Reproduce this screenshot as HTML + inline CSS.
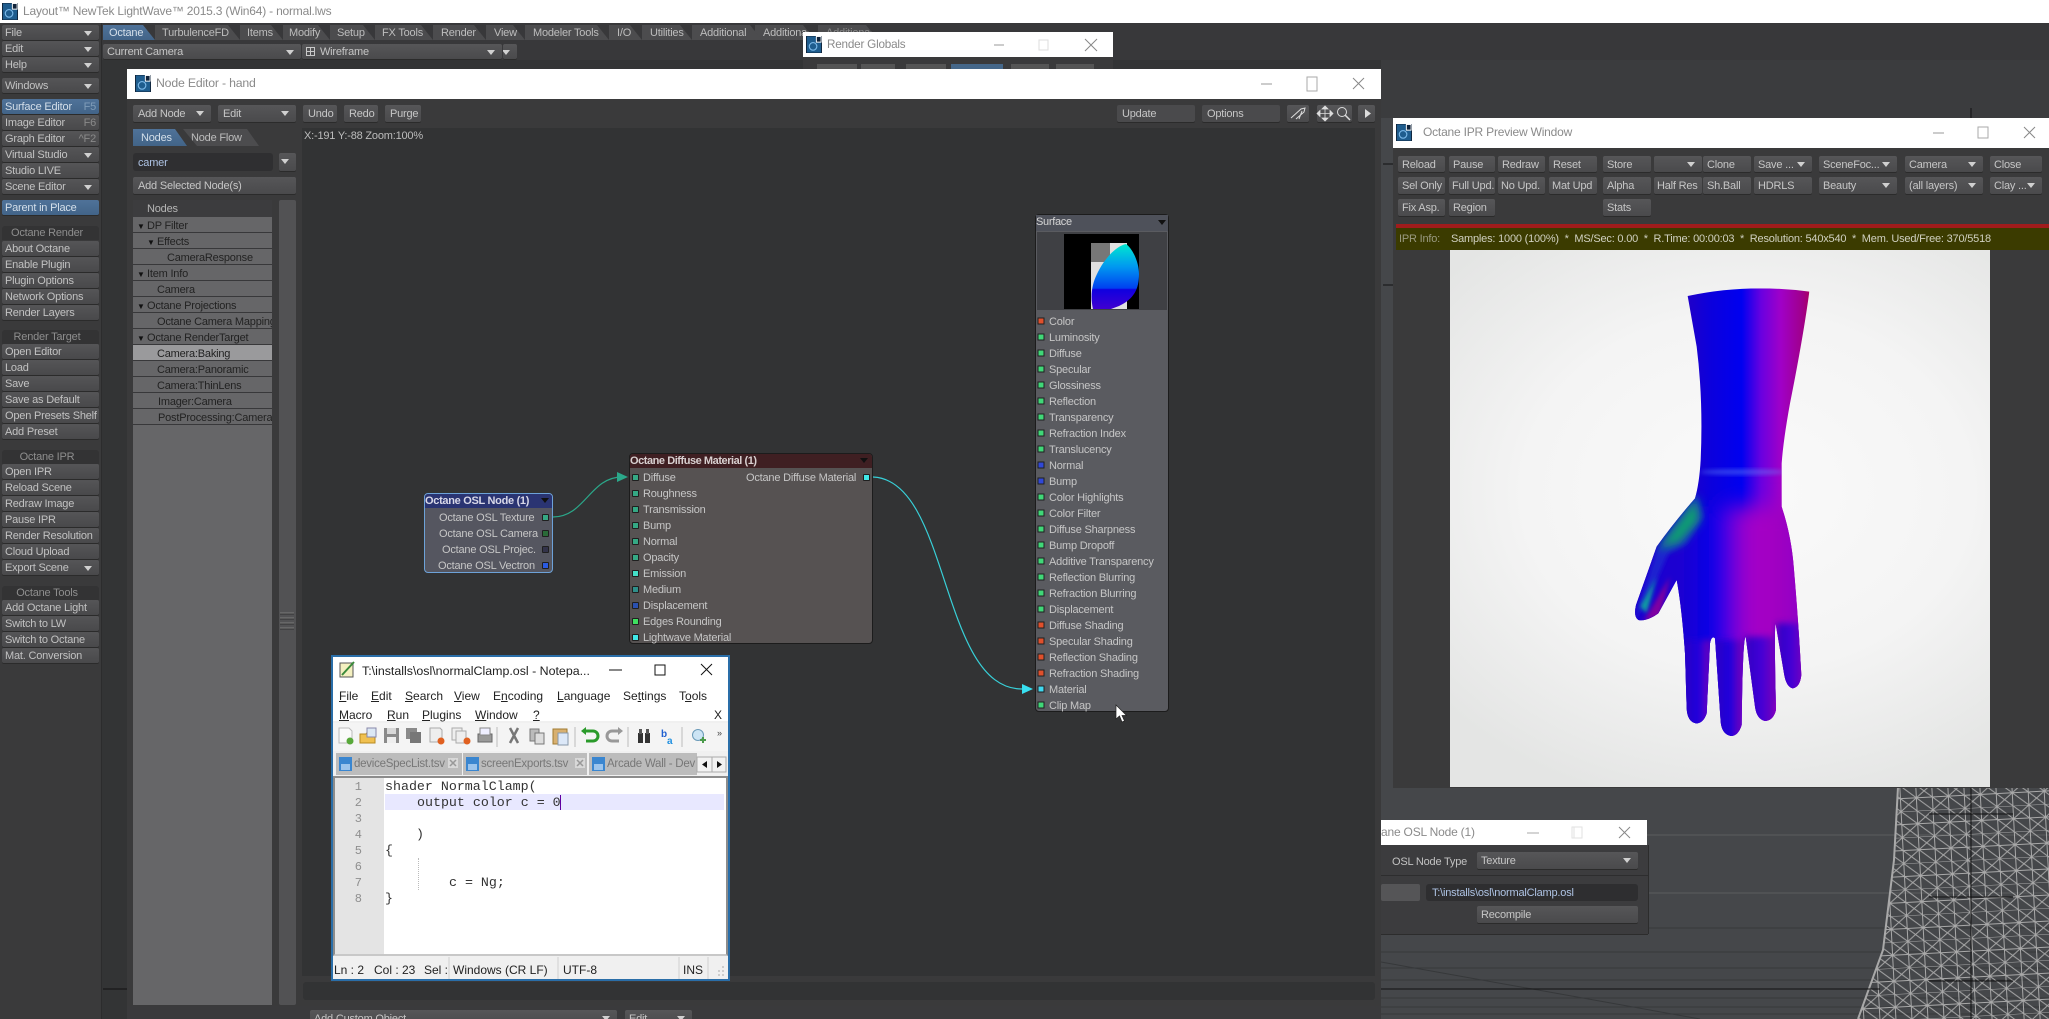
<!DOCTYPE html>
<html><head><meta charset="utf-8"><title>Layout</title>
<style>
html,body{margin:0;padding:0;background:#3a3a3b}
#r{position:relative;width:2049px;height:1019px;overflow:hidden;background:#3a3a3b;font-family:"Liberation Sans",sans-serif;font-size:11px;color:#c2c2c2;letter-spacing:-.2px}
#r div,#r svg{position:absolute}
.t,.b,.l,.tab,.nr,.li{white-space:nowrap}
.b{height:16px;line-height:16px;background:linear-gradient(#565658,#4a4a4c);border-radius:2px;padding-left:4px;padding-top:1px;box-sizing:border-box;box-shadow:0 1px 0 #2b2b2b;color:#c6c6c6;overflow:hidden}
.l{left:2px;width:97px;height:15px;line-height:15px;background:linear-gradient(#555557,#49494b);border-radius:2px;padding-left:3px;padding-top:1px;box-sizing:border-box;box-shadow:0 1px 0 #2b2b2b;color:#c2c2c2;overflow:hidden}
.bl{background:linear-gradient(#4f7299,#426488)!important;color:#d4dfea!important}
.a::after{content:"";position:absolute;right:7px;top:6px;border-top:5px solid #d0d0d0;border-left:4px solid transparent;border-right:4px solid transparent}
.k{position:absolute;right:3px;top:1px;color:#8a8a8a}
.h{left:2px;width:97px;height:14px;line-height:15px;background:#333334;border-radius:3px 3px 0 0;text-align:center;color:#8e8e8e;padding-right:7px;box-sizing:border-box}
.tab{top:25px;height:15px;line-height:15px;padding-top:1px;background:#4c4c4e;clip-path:polygon(0 0,calc(100% - 12px) 0,100% 100%,0 100%);color:#bdbdbd}
.w{background:#fff}
.tt{color:#8a8a8a;font-size:12px;white-space:nowrap}
.li{left:133px;width:139px;height:16px;line-height:16px;padding-top:1px;box-sizing:border-box;background:#666668;border-bottom:1px solid #38383a;color:#222;overflow:hidden;padding-left:14px}
.li span{position:absolute;font-size:8px;left:4px;top:2px;color:#111}
.nr{height:16px;line-height:16px;padding-top:1px;box-sizing:border-box;color:#c6c6c6}
.s{width:5px;height:5px;border:1px solid #1f1f1f;border-radius:1px}
.m{color:#222;font-size:12px;white-space:nowrap;letter-spacing:0}
.c{font-family:"Liberation Mono",monospace;font-size:13.3px;color:#333;white-space:pre;line-height:16px;letter-spacing:0}
.g{font-family:"Liberation Mono",monospace;font-size:12px;color:#8f8f8f;width:20px;text-align:right;left:342px;line-height:16px;letter-spacing:0}
.p{height:17px;line-height:17px}
</style></head><body><div id="r">

<!-- viewport background -->
<svg width="2049" height="1019" style="left:0;top:0">
<defs>
<pattern id="mesh" width="32" height="26" patternUnits="userSpaceOnUse" patternTransform="rotate(-3)">
<path d="M0 0H32M0 13H32M0 0V26M16 0V26M32 0V26M0 0L16 13L32 0M0 26L16 13L32 26M0 13L16 26M16 0L32 13" stroke="#a9a9a9" stroke-width="1" fill="none"/>
</pattern>
<symbol id="lw" viewBox="0 0 16 18"><rect width="16" height="18" fill="#1f5d8e"/><rect x="0" y="0" width="16" height="18" fill="none" stroke="#10233a"/><path d="M10 0h6v7h-6z" fill="#fff"/><path d="M11 1h4v5h-4z" fill="#10233a"/><circle cx="7" cy="11" r="4" fill="none" stroke="#7ab8e8" stroke-width="1.2"/></symbol>
</defs>
<rect x="1381" y="60" width="668" height="960" fill="#45474a"/>
<rect x="1381" y="60" width="668" height="58" fill="#3b3c3e"/>
<path d="M1381 835H2049M1381 893H2049" stroke="#5a5d5f" stroke-width="1"/>
<path d="M1381 928H2049M1381 952H2049M1381 968H2049M1381 980H2049M1381 998H2049M1381 1007H2049M1381 1014H2049" stroke="#36383a" stroke-width="1"/>
<path d="M1381 962L1700 1019" stroke="#36383a"/>
<path d="M1898 787L1894 860L1883 950L1858 1019H2049V787Z" fill="url(#mesh)"/>
<path d="M1898 787L1894 860L1883 950L1858 1019" stroke="#a9a9a9" stroke-width="2" fill="none"/>
<path d="M1381 989H1880M1971 787V1019M1929 814H2013M1929 897H2013M1929 981H2013M1971 108V118M1383 164H1393M1383 285H1393" stroke="#111" stroke-width="1"/>
<rect x="100" y="42" width="1281" height="977" fill="#333435"/>
<rect x="0" y="23" width="2049" height="37" fill="#38383a"/>
<rect x="0" y="23" width="101" height="996" fill="#3a3a3b"/>
<rect x="101" y="23" width="1" height="996" fill="#2c2c2d"/>
<rect x="103" y="60" width="24" height="959" fill="#333435"/>
<rect x="127" y="1006" width="1254" height="13" fill="#3a3a3c"/>
<path d="M103 989H127" stroke="#111"/>
</svg>

<!-- main title -->
<div class="w" style="left:0;top:0;width:2049px;height:23px"></div>
<svg width="16" height="17" style="left:2px;top:3px"><use href="#lw"/></svg>
<div class="tt" style="left:23px;top:4px;line-height:15px">Layout™ NewTek LightWave™ 2015.3 (Win64) - normal.lws</div>

<!-- left column -->
<div class="l a" style="top:25px">File</div>
<div class="l a" style="top:41px">Edit</div>
<div class="l a" style="top:57px">Help</div>
<div class="l a" style="top:78px">Windows</div>
<div class="l bl" style="top:99px">Surface Editor<span class="k" style="color:#7f9cb8">F5</span></div>
<div class="l" style="top:115px">Image Editor<span class="k">F6</span></div>
<div class="l" style="top:131px">Graph Editor<span class="k">^F2</span></div>
<div class="l a" style="top:147px">Virtual Studio</div>
<div class="l" style="top:163px">Studio LIVE</div>
<div class="l a" style="top:179px">Scene Editor</div>
<div class="l bl" style="top:200px">Parent in Place</div>
<div class="h" style="top:226px">Octane Render</div>
<div class="l" style="top:241px">About Octane</div>
<div class="l" style="top:257px">Enable Plugin</div>
<div class="l" style="top:273px">Plugin Options</div>
<div class="l" style="top:289px">Network Options</div>
<div class="l" style="top:305px">Render Layers</div>
<div class="h" style="top:330px">Render Target</div>
<div class="l" style="top:344px">Open Editor</div>
<div class="l" style="top:360px">Load</div>
<div class="l" style="top:376px">Save</div>
<div class="l" style="top:392px">Save as Default</div>
<div class="l" style="top:408px">Open Presets Shelf</div>
<div class="l" style="top:424px">Add Preset</div>
<div class="h" style="top:450px">Octane IPR</div>
<div class="l" style="top:464px">Open IPR</div>
<div class="l" style="top:480px">Reload Scene</div>
<div class="l" style="top:496px">Redraw Image</div>
<div class="l" style="top:512px">Pause IPR</div>
<div class="l" style="top:528px">Render Resolution</div>
<div class="l" style="top:544px">Cloud Upload</div>
<div class="l a" style="top:560px">Export Scene</div>
<div class="h" style="top:586px">Octane Tools</div>
<div class="l" style="top:600px">Add Octane Light</div>
<div class="l" style="top:616px">Switch to LW</div>
<div class="l" style="top:632px">Switch to Octane</div>
<div class="l" style="top:648px">Mat. Conversion</div>

<!-- tabs -->
<div class="tab" style="left:755px;width:60px;padding-left:8px;box-sizing:border-box">Additional</div>
<div class="tab" style="left:818px;width:60px;padding-left:8px;box-sizing:border-box;color:#8a8a8a">Additional</div>
<div class="tab" style="left:692px;width:70px;padding-left:8px;box-sizing:border-box">Additional</div>
<div class="tab" style="left:642px;width:50px;padding-left:8px;box-sizing:border-box">Utilities</div>
<div class="tab" style="left:609px;width:33px;padding-left:8px;box-sizing:border-box">I/O</div>
<div class="tab" style="left:525px;width:84px;padding-left:8px;box-sizing:border-box">Modeler Tools</div>
<div class="tab" style="left:486px;width:39px;padding-left:8px;box-sizing:border-box">View</div>
<div class="tab" style="left:433px;width:53px;padding-left:8px;box-sizing:border-box">Render</div>
<div class="tab" style="left:375px;width:58px;padding-left:7px;box-sizing:border-box">FX Tools</div>
<div class="tab" style="left:330px;width:45px;padding-left:7px;box-sizing:border-box">Setup</div>
<div class="tab" style="left:283px;width:47px;padding-left:6px;box-sizing:border-box">Modify</div>
<div class="tab" style="left:240px;width:43px;padding-left:7px;box-sizing:border-box">Items</div>
<div class="tab" style="left:155px;width:85px;padding-left:7px;box-sizing:border-box">TurbulenceFD</div>
<div class="tab bl" style="left:103px;width:52px;padding-left:6px;box-sizing:border-box">Octane</div>

<div class="b a" style="left:103px;top:44px;width:198px;height:15px;line-height:15px">Current Camera</div>
<div class="b a" style="left:302px;top:44px;width:200px;height:15px;line-height:15px;padding-left:18px">Wireframe</div>
<svg width="10" height="10" style="left:306px;top:47px"><path d="M.5.5h8v8h-8zM4.500.5v8M.5 4.500h8" stroke="#c8c8c8" fill="none"/></svg>
<div class="b a" style="left:503px;top:44px;width:14px;height:15px"></div>

<!-- Render Globals -->
<div style="left:803px;top:57px;width:310px;height:14px;background:#3a3a3b"></div>
<div class="w" style="left:803px;top:32px;width:310px;height:25px"></div>
<svg width="16" height="17" style="left:806px;top:36px"><use href="#lw"/></svg>
<div class="tt" style="left:827px;top:37px;line-height:15px;font-size:11.7px">Render Globals</div>
<svg width="310" height="25" style="left:803px;top:32px"><path d="M191 13H201" stroke="#999" fill="none"/><path d="M236 8h9v10h-9z" stroke="#ddd" fill="none"/><path d="M282 7L294 19M294 7L282 19" stroke="#888" fill="none"/></svg>
<div style="left:817px;top:64px;width:40px;height:5px;background:#555"></div>
<div style="left:861px;top:64px;width:34px;height:5px;background:#555"></div>
<div style="left:906px;top:64px;width:40px;height:5px;background:#555"></div>
<div style="left:951px;top:64px;width:52px;height:5px;background:#456789"></div>
<div style="left:1011px;top:64px;width:38px;height:5px;background:#555"></div>
<div style="left:1056px;top:64px;width:38px;height:5px;background:#555"></div>

<!-- OSL Panel -->
<div style="left:1381px;top:845px;width:267px;height:89px;background:#3c3c3e;box-shadow:0 1px 0 #2c2c2c,1px 0 0 #2c2c2c"></div>
<div class="w" style="left:1381px;top:820px;width:266px;height:25px"></div>
<div class="tt" style="left:1381px;top:825px;line-height:15px">ane OSL Node (1)</div>
<svg width="266" height="25" style="left:1381px;top:820px"><path d="M146 13H158" stroke="#aaa" fill="none"/><path d="M191 7h10v11h-10zM193 7v11" stroke="#e2e2e2" fill="none"/><path d="M238 7L249 18M249 7L238 18" stroke="#888" fill="none"/></svg>
<div class="t" style="left:1392px;top:854px;line-height:16px">OSL Node Type</div>
<div class="b a" style="left:1477px;top:852px;width:161px;height:17px;line-height:17px">Texture</div>
<div style="left:1381px;top:875px;width:267px;height:1px;background:#2d2d2e"></div>
<div style="left:1381px;top:884px;width:39px;height:17px;background:#555557;border-radius:2px"></div>
<div style="left:1426px;top:884px;width:212px;height:17px;background:#2e2e30;border-radius:3px"></div>
<div class="t" style="left:1432px;top:885px;line-height:17px;color:#aec3e4">T:\installs\osl\normalClamp.osl</div>
<div class="b" style="left:1477px;top:906px;width:161px;height:17px;line-height:17px">Recompile</div>

<!-- Node Editor -->
<div style="left:127px;top:99px;width:1254px;height:907px;background:#3a3a3b"></div>
<div class="w" style="left:127px;top:69px;width:1254px;height:30px"></div>
<svg width="16" height="17" style="left:135px;top:75px"><use href="#lw"/></svg>
<div class="tt" style="left:156px;top:75px;line-height:17px;font-size:12.3px">Node Editor - hand</div>
<svg width="1254" height="30" style="left:127px;top:69px"><path d="M1134 15H1145" stroke="#999" fill="none"/><path d="M1180 8h10v14h-10z" stroke="#aaa" fill="none"/><path d="M1226 9L1237 20M1237 9L1226 20" stroke="#888" fill="none"/></svg>

<div class="b a p" style="left:133px;top:105px;width:78px;padding-left:5px">Add Node</div>
<div class="b a p" style="left:218px;top:105px;width:78px;padding-left:5px">Edit</div>
<div class="b p" style="left:303px;top:105px;width:34px;padding-left:5px">Undo</div>
<div class="b p" style="left:344px;top:105px;width:34px;padding-left:5px">Redo</div>
<div class="b p" style="left:385px;top:105px;width:36px;padding-left:5px">Purge</div>
<div class="b p" style="left:1117px;top:105px;width:78px;padding-left:5px;background:#4a4a4c">Update</div>
<div class="b p" style="left:1202px;top:105px;width:78px;padding-left:5px;background:#4a4a4c">Options</div>
<div class="b p" style="left:1287px;top:105px;width:22px"></div>
<div class="b p" style="left:1317px;top:105px;width:35px"></div>
<div class="b p" style="left:1358px;top:105px;width:17px"></div>
<svg width="70" height="17" style="left:1287px;top:105px"><path d="M4 13L14 4L18 3L17 7L9 14M15 6L12 14" stroke="#ddd" fill="none"/><path d="M30 8.500H46M38 1V16M30 8.500l3-3v6zM46 8.500l-3-3v6zM38 1l-3 3h6zM38 16l-3-3h6z" stroke="#ddd" fill="#ddd" stroke-width=".8"/></svg>
<svg width="40" height="17" style="left:1335px;top:105px"><circle cx="7" cy="7" r="4.500" stroke="#ddd" fill="none"/><path d="M10 10L15 15" stroke="#ddd" stroke-width="1.500"/><path d="M30 4L36 8.500L30 13Z" fill="#ddd"/></svg>

<div class="tab bl" style="left:133px;top:129px;width:54px;height:17px;line-height:17px;padding-left:8px;box-sizing:border-box">Nodes</div>
<div class="tab" style="left:183px;top:129px;width:76px;height:17px;line-height:17px;padding-left:8px;box-sizing:border-box;z-index:0;background:#4c4c4e;clip-path:polygon(0 0,calc(100% - 12px) 0,100% 100%,14px 100%)">Node Flow</div>
<div style="left:133px;top:153px;width:140px;height:18px;background:#2f2f31;border-radius:3px"></div>
<div class="t" style="left:138px;top:154px;line-height:18px;color:#aec3e4">camer</div>
<div class="b a" style="left:279px;top:153px;width:17px;height:18px"></div>
<div class="b p" style="left:133px;top:177px;width:163px;padding-left:5px">Add Selected Node(s)</div>

<!-- list -->
<div style="left:133px;top:200px;width:139px;height:805px;background:#666668"></div>
<div style="left:279px;top:200px;width:17px;height:805px;background:#525254;border-radius:2px"></div>
<svg width="17" height="20" style="left:279px;top:611px"><path d="M1 2H15M1 7H15M1 12H15M1 17H15" stroke="#7c7c7c"/><path d="M1 3H15M1 8H15M1 13H15M1 18H15" stroke="#333"/></svg>
<div class="li" style="top:200px;height:17px;background:#3c3c3e;color:#b6b6b6;border:0;line-height:17px;">Nodes</div>
<div class="li" style="top:217px"><span>▼</span>DP Filter</div>
<div class="li" style="top:233px;padding-left:24px"><span style="left:14px">▼</span>Effects</div>
<div class="li" style="top:249px;padding-left:34px">CameraResponse</div>
<div class="li" style="top:265px"><span>▼</span>Item Info</div>
<div class="li" style="top:281px;padding-left:24px">Camera</div>
<div class="li" style="top:297px"><span>▼</span>Octane Projections</div>
<div class="li" style="top:313px;padding-left:24px">Octane Camera Mapping</div>
<div class="li" style="top:329px"><span>▼</span>Octane RenderTarget</div>
<div class="li" style="top:345px;padding-left:24px;background:#9a9a9c">Camera:Baking</div>
<div class="li" style="top:361px;padding-left:24px">Camera:Panoramic</div>
<div class="li" style="top:377px;padding-left:24px">Camera:ThinLens</div>
<div class="li" style="top:393px;padding-left:25px">Imager:Camera</div>
<div class="li" style="top:409px;padding-left:25px">PostProcessing:Camera</div>

<!-- canvas -->
<div style="left:302px;top:128px;width:1073px;height:848px;background:#323334"></div>
<div style="left:303px;top:982px;width:1072px;height:18px;background:#323334;border-radius:3px"></div>
<div class="t" style="left:304px;top:129px;line-height:15px;color:#bdbdbd">X:-191 Y:-88 Zoom:100%</div>

<!-- nodes -->
<svg width="1100" height="300" style="left:500px;top:440px;overflow:visible">
<path d="M53 77C85 77 90 37 122 37" stroke="#2ba88a" fill="none" stroke-width="1.200"/>
<path d="M117 32L128 37L117 42Z" fill="#2ba88a"/>
<path d="M373 37C450 40 440 249 522 249" stroke="#38d0d8" fill="none" stroke-width="1.200"/>
<path d="M522 244L533 249L522 254Z" fill="#38e0f0"/>
</svg>

<div style="left:424px;top:493px;width:129px;height:80px;background:#555660;border:1px solid #6da2d8;box-sizing:border-box;border-radius:4px"></div>
<div style="left:425px;top:494px;width:127px;height:14px;background:#2a3472;border-radius:3px 3px 0 0"></div>
<div class="t" style="left:425px;top:493px;line-height:16px;font-weight:bold;color:#d8d8e8;letter-spacing:-.3px">Octane OSL Node (1)</div>
<div style="left:541px;top:498px;border-top:5px solid #111;border-left:4px solid transparent;border-right:4px solid transparent"></div>
<div class="nr" style="left:439px;top:509px">Octane OSL Texture</div>
<div class="nr" style="left:439px;top:525px">Octane OSL Camera</div>
<div class="nr" style="left:442px;top:541px">Octane OSL Projec.</div>
<div class="nr" style="left:438px;top:557px">Octane OSL Vectron</div>
<div class="s" style="left:542px;top:514px;background:#35a884"></div>
<div class="s" style="left:542px;top:530px;background:#2a6a38"></div>
<div class="s" style="left:542px;top:546px;background:#33334a"></div>
<div class="s" style="left:542px;top:562px;background:#2a5ae0"></div>

<div style="left:629px;top:453px;width:244px;height:191px;background:#565252;border:1px solid #1c1c1c;box-sizing:border-box;border-radius:4px"></div>
<div style="left:630px;top:454px;width:242px;height:14px;background:#3f1f22;border-radius:3px 3px 0 0"></div>
<div class="t" style="left:630px;top:453px;line-height:16px;font-weight:bold;color:#d8d0d0;letter-spacing:-.45px">Octane Diffuse Material (1)</div>
<div style="left:860px;top:458px;border-top:5px solid #111;border-left:4px solid transparent;border-right:4px solid transparent"></div>
<div class="nr" style="left:643px;top:469px">Diffuse</div>
<div class="nr" style="left:643px;top:485px">Roughness</div>
<div class="nr" style="left:643px;top:501px">Transmission</div>
<div class="nr" style="left:643px;top:517px">Bump</div>
<div class="nr" style="left:643px;top:533px">Normal</div>
<div class="nr" style="left:643px;top:549px">Opacity</div>
<div class="nr" style="left:643px;top:565px">Emission</div>
<div class="nr" style="left:643px;top:581px">Medium</div>
<div class="nr" style="left:643px;top:597px">Displacement</div>
<div class="nr" style="left:643px;top:613px">Edges Rounding</div>
<div class="nr" style="left:643px;top:629px">Lightwave Material</div>
<div class="nr" style="left:746px;top:469px">Octane Diffuse Material</div>
<div class="s" style="left:632px;top:474px;background:#35a884"></div>
<div class="s" style="left:632px;top:490px;background:#35a884"></div>
<div class="s" style="left:632px;top:506px;background:#35a884"></div>
<div class="s" style="left:632px;top:522px;background:#35a884"></div>
<div class="s" style="left:632px;top:538px;background:#35a884"></div>
<div class="s" style="left:632px;top:554px;background:#35a884"></div>
<div class="s" style="left:632px;top:570px;background:#44e0c8"></div>
<div class="s" style="left:632px;top:586px;background:#2f8f8a"></div>
<div class="s" style="left:632px;top:602px;background:#2a50b0"></div>
<div class="s" style="left:632px;top:618px;background:#3fe060"></div>
<div class="s" style="left:632px;top:634px;background:#40e8e8"></div>
<div class="s" style="left:863px;top:474px;background:#40e8e8"></div>

<div style="left:1035px;top:214px;width:134px;height:498px;background:#5a5b60;border:1px solid #1c1c1c;box-sizing:border-box;border-radius:4px"></div>
<div style="left:1036px;top:215px;width:132px;height:16px;background:#4e515a"></div>
<div class="t" style="left:1036px;top:214px;line-height:17px;color:#d6d6d6;letter-spacing:-.3px">Surface</div>
<div style="left:1158px;top:220px;border-top:5px solid #111;border-left:4px solid transparent;border-right:4px solid transparent"></div>
<div style="left:1037px;top:232px;width:130px;height:78px;background:#3f4044"></div>
<svg width="75" height="75" style="left:1064px;top:234px"><defs><linearGradient id="pg" x1="0" y1="0" x2="0" y2="1"><stop offset="0" stop-color="#00e8d0"/><stop offset=".35" stop-color="#0098f0"/><stop offset=".68" stop-color="#0040f0"/><stop offset=".7" stop-color="#1000e0"/><stop offset="1" stop-color="#4000d0"/></linearGradient></defs><rect width="75" height="75"/><rect x="27" y="9" width="36" height="66" fill="#e0e0e0"/><rect x="27" y="9" width="19" height="19" fill="#777"/><path d="M29 75C26 62 28 50 33 40C40 25 52 12 62 10C70 16 75 30 75 40C75 55 70 65 55 72L47 75Z" fill="url(#pg)"/></svg>

<div class="nr" style="left:1049px;top:313px">Color</div>
<div class="nr" style="left:1049px;top:329px">Luminosity</div>
<div class="nr" style="left:1049px;top:345px">Diffuse</div>
<div class="nr" style="left:1049px;top:361px">Specular</div>
<div class="nr" style="left:1049px;top:377px">Glossiness</div>
<div class="nr" style="left:1049px;top:393px">Reflection</div>
<div class="nr" style="left:1049px;top:409px">Transparency</div>
<div class="nr" style="left:1049px;top:425px">Refraction Index</div>
<div class="nr" style="left:1049px;top:441px">Translucency</div>
<div class="nr" style="left:1049px;top:457px">Normal</div>
<div class="nr" style="left:1049px;top:473px">Bump</div>
<div class="nr" style="left:1049px;top:489px">Color Highlights</div>
<div class="nr" style="left:1049px;top:505px">Color Filter</div>
<div class="nr" style="left:1049px;top:521px">Diffuse Sharpness</div>
<div class="nr" style="left:1049px;top:537px">Bump Dropoff</div>
<div class="nr" style="left:1049px;top:553px">Additive Transparency</div>
<div class="nr" style="left:1049px;top:569px">Reflection Blurring</div>
<div class="nr" style="left:1049px;top:585px">Refraction Blurring</div>
<div class="nr" style="left:1049px;top:601px">Displacement</div>
<div class="nr" style="left:1049px;top:617px">Diffuse Shading</div>
<div class="nr" style="left:1049px;top:633px">Specular Shading</div>
<div class="nr" style="left:1049px;top:649px">Reflection Shading</div>
<div class="nr" style="left:1049px;top:665px">Refraction Shading</div>
<div class="nr" style="left:1049px;top:681px">Material</div>
<div class="nr" style="left:1049px;top:697px">Clip Map</div>
<svg width="10" height="400" style="left:1037px;top:317px"><g stroke="#1f1f1f">
<rect x="1" y="1" width="6" height="6" fill="#e0502c"/>
<rect x="1" y="17" width="6" height="6" fill="#40d878"/><rect x="1" y="33" width="6" height="6" fill="#40d878"/><rect x="1" y="49" width="6" height="6" fill="#40d878"/><rect x="1" y="65" width="6" height="6" fill="#40d878"/><rect x="1" y="81" width="6" height="6" fill="#40d878"/><rect x="1" y="97" width="6" height="6" fill="#40d878"/><rect x="1" y="113" width="6" height="6" fill="#40d878"/><rect x="1" y="129" width="6" height="6" fill="#40d878"/>
<rect x="1" y="145" width="6" height="6" fill="#3048d8"/><rect x="1" y="161" width="6" height="6" fill="#3048d8"/>
<rect x="1" y="177" width="6" height="6" fill="#40d878"/><rect x="1" y="193" width="6" height="6" fill="#40d878"/><rect x="1" y="209" width="6" height="6" fill="#40d878"/><rect x="1" y="225" width="6" height="6" fill="#40d878"/><rect x="1" y="241" width="6" height="6" fill="#40d878"/><rect x="1" y="257" width="6" height="6" fill="#40d878"/><rect x="1" y="273" width="6" height="6" fill="#40d878"/><rect x="1" y="289" width="6" height="6" fill="#40d878"/>
<rect x="1" y="305" width="6" height="6" fill="#e0502c"/><rect x="1" y="321" width="6" height="6" fill="#e0502c"/><rect x="1" y="337" width="6" height="6" fill="#e0502c"/><rect x="1" y="353" width="6" height="6" fill="#e0502c"/>
<rect x="1" y="369" width="6" height="6" fill="#40d8f0"/>
<rect x="1" y="385" width="6" height="6" fill="#40d878"/></g></svg>
<svg width="16" height="20" style="left:1115px;top:704px"><path d="M1 1V15L4.500 12L7 18L9.500 17L7 11.500H11.500Z" fill="#fff" stroke="#222" stroke-width=".7"/></svg>

<!-- bottom row behind -->
<div class="b a" style="left:310px;top:1010px;width:307px;height:15px">Add Custom Object</div>
<div class="b a" style="left:625px;top:1010px;width:67px;height:15px">Edit</div>

<!-- IPR -->
<div style="left:1393px;top:148px;width:656px;height:640px;background:#3a3a3b"></div>
<div class="w" style="left:1393px;top:118px;width:656px;height:30px"></div>
<svg width="16" height="17" style="left:1396px;top:124px"><use href="#lw"/></svg>
<div class="tt" style="left:1423px;top:125px;line-height:15px">Octane IPR Preview Window</div>
<svg width="656" height="30" style="left:1393px;top:118px"><path d="M540 15H551" stroke="#999" fill="none"/><path d="M585 9h10v11h-10z" stroke="#aaa" fill="none"/><path d="M631 9L642 20M642 9L631 20" stroke="#888" fill="none"/></svg>

<div class="b" style="left:1398px;top:156px;width:47px">Reload</div>
<div class="b" style="left:1449px;top:156px;width:46px">Pause</div>
<div class="b" style="left:1498px;top:156px;width:47px">Redraw</div>
<div class="b" style="left:1549px;top:156px;width:48px">Reset</div>
<div class="b" style="left:1603px;top:156px;width:48px">Store</div>
<div class="b a" style="left:1654px;top:156px;width:48px"></div>
<div class="b" style="left:1703px;top:156px;width:48px">Clone</div>
<div class="b a" style="left:1754px;top:156px;width:58px">Save ...</div>
<div class="b a" style="left:1819px;top:156px;width:78px">SceneFoc...</div>
<div class="b a" style="left:1905px;top:156px;width:78px">Camera</div>
<div class="b" style="left:1990px;top:156px;width:52px">Close</div>
<div class="b" style="left:1398px;top:177px;width:47px;height:17px;line-height:17px">Sel Only</div>
<div class="b" style="left:1449px;top:177px;width:46px;height:17px;line-height:17px;padding-left:3px">Full Upd.</div>
<div class="b" style="left:1498px;top:177px;width:47px;height:17px;line-height:17px;padding-left:3px">No Upd.</div>
<div class="b" style="left:1549px;top:177px;width:48px;height:17px;line-height:17px;padding-left:3px">Mat Upd</div>
<div class="b" style="left:1603px;top:177px;width:48px;height:17px;line-height:17px">Alpha</div>
<div class="b" style="left:1654px;top:177px;width:48px;height:17px;line-height:17px;padding-left:3px">Half Res</div>
<div class="b" style="left:1703px;top:177px;width:48px;height:17px;line-height:17px">Sh.Ball</div>
<div class="b" style="left:1754px;top:177px;width:58px;height:17px;line-height:17px">HDRLS</div>
<div class="b a" style="left:1819px;top:177px;width:78px;height:17px;line-height:17px">Beauty</div>
<div class="b a" style="left:1905px;top:177px;width:78px;height:17px;line-height:17px">(all layers)</div>
<div class="b a" style="left:1990px;top:177px;width:52px;height:17px;line-height:17px">Clay ...</div>
<div class="b" style="left:1398px;top:199px;width:47px;height:17px;line-height:17px">Fix Asp.</div>
<div class="b" style="left:1449px;top:199px;width:46px;height:17px;line-height:17px">Region</div>
<div class="b" style="left:1603px;top:199px;width:48px;height:17px;line-height:17px">Stats</div>
<div style="left:1396px;top:224px;width:653px;height:4px;background:#a01c1c"></div>
<div style="left:1396px;top:228px;width:653px;height:22px;background:#3b3b00"></div>
<div class="t" style="left:1399px;top:228px;line-height:22px;color:#9a9a80">IPR Info:</div>
<div class="t" style="left:1451px;top:228px;line-height:22px;color:#d0d0c0">Samples: 1000 (100%) &nbsp;* &nbsp;MS/Sec: 0.00 &nbsp;* &nbsp;R.Time: 00:00:03 &nbsp;* &nbsp;Resolution: 540x540 &nbsp;* &nbsp;Mem. Used/Free: 370/5518</div>

<div style="left:1450px;top:250px;width:540px;height:537px;background:radial-gradient(ellipse 75% 60% at 55% 45%,#fafafa 0%,#f4f4f4 55%,#e4e5e4 100%)"></div>
<svg width="300" height="520" viewBox="0 0 900 1560" style="left:1600px;top:260px">
<defs>
<linearGradient id="hg" gradientUnits="userSpaceOnUse" x1="250" y1="0" x2="640" y2="0">
<stop offset="0" stop-color="#2400c4"/><stop offset=".2" stop-color="#0c00dc"/><stop offset=".45" stop-color="#0000f0"/><stop offset=".6" stop-color="#6a00e0"/><stop offset=".75" stop-color="#a000c8"/><stop offset=".92" stop-color="#a00088"/><stop offset="1" stop-color="#b00050"/>
</linearGradient>
<linearGradient id="hg2" gradientUnits="userSpaceOnUse" x1="250" y1="0" x2="600" y2="0">
<stop offset="0" stop-color="#1c00d0"/><stop offset=".3" stop-color="#0000ee"/><stop offset=".45" stop-color="#7000d8"/><stop offset=".55" stop-color="#a800c8"/><stop offset=".85" stop-color="#a000c0"/><stop offset="1" stop-color="#8c00c8"/>
</linearGradient>
<linearGradient id="f1" x1="0" y1="0" x2="1" y2="0"><stop offset="0" stop-color="#3000c0"/><stop offset=".55" stop-color="#1a00e0"/><stop offset="1" stop-color="#8000b0"/></linearGradient>
<linearGradient id="f2" x1="0" y1="0" x2="1" y2="0"><stop offset="0" stop-color="#3000c0"/><stop offset=".5" stop-color="#4000d8"/><stop offset="1" stop-color="#7c00b8"/></linearGradient>
<clipPath id="hc"><path id="hp" d="M263 108Q440 70 628 95Q610 230 570 430Q550 540 545 610L545 740Q575 830 582 930Q595 1080 604 1245Q600 1282 578 1285Q558 1280 552 1240L527 1092Q522 1100 528 1350Q520 1382 495 1383Q470 1378 465 1340L437 1130Q428 1135 425 1395Q415 1428 392 1428Q365 1422 362 1385L345 1135Q335 1125 330 1150L320 1360Q310 1390 288 1390Q262 1385 260 1345L255 1180Q245 1040 230 960L175 1060Q140 1085 115 1080Q100 1070 108 1035L170 860Q220 790 285 715Q298 670 302 600Q310 420 290 260Z"/></clipPath>
<filter id="bl1" x="-30%" y="-30%" width="160%" height="160%"><feGaussianBlur stdDeviation="14"/></filter>
<filter id="bl2" x="-30%" y="-30%" width="160%" height="160%"><feGaussianBlur stdDeviation="6"/></filter>
<filter id="bl3" x="-20%" y="-20%" width="140%" height="140%"><feGaussianBlur stdDeviation="30"/></filter>
<filter id="bl4" x="-20%" y="-20%" width="140%" height="140%"><feGaussianBlur stdDeviation="10"/></filter>
</defs>
<g clip-path="url(#hc)">
<rect x="90" y="60" width="560" height="1400" fill="url(#hg)"/>
<rect x="0" y="740" width="800" height="800" fill="url(#hg2)" filter="url(#bl3)"/>
<rect x="250" y="1140" width="85" height="290" fill="url(#f1)" filter="url(#bl4)"/>
<rect x="345" y="1140" width="85" height="320" fill="url(#f1)" filter="url(#bl4)"/>
<rect x="435" y="1130" width="95" height="290" fill="url(#f2)" filter="url(#bl4)"/>
<rect x="530" y="1090" width="85" height="230" fill="url(#f2)" filter="url(#bl4)"/>
<path d="M100 1090L170 870L290 700L310 770L260 850L205 880L170 960Z" fill="#1a20d0" filter="url(#bl2)"/>
<path d="M170 870L290 710L300 780L240 850Z" fill="#10a070" filter="url(#bl1)"/>
<path d="M120 1040L170 950L140 1060Z" fill="#10a0a0" filter="url(#bl2)"/>
<path d="M210 950L130 1085L180 1070Z" fill="#8000a0" filter="url(#bl2)"/>
<ellipse cx="430" cy="636" rx="130" ry="9" fill="#6a8cf8" opacity=".45" filter="url(#bl2)"/>
</g>
</svg>

<!-- Notepad++ -->
<div style="left:331px;top:655px;width:399px;height:326px;background:#f0f0f0;border:2px solid #2a6ea8;box-sizing:border-box"></div>
<div class="w" style="left:333px;top:657px;width:395px;height:64px"></div>
<svg width="18" height="18" style="left:339px;top:661px"><rect x="1" y="2" width="13" height="14" fill="#f4f0c0" stroke="#555"/><path d="M3 14L15 1" stroke="#3a8a3a" stroke-width="2"/></svg>
<div class="m" style="left:362px;top:663px;line-height:16px;font-size:12.4px">T:\installs\osl\normalClamp.osl - Notepa...</div>
<svg width="397" height="30" style="left:332px;top:655px"><path d="M277 15H290M323 10h10v10h-10zM369 9L380 20M380 9L369 20" stroke="#111" fill="none"/></svg>
<div class="m" style="left:339px;top:689px"><u>F</u>ile</div>
<div class="m" style="left:371px;top:689px"><u>E</u>dit</div>
<div class="m" style="left:405px;top:689px"><u>S</u>earch</div>
<div class="m" style="left:454px;top:689px"><u>V</u>iew</div>
<div class="m" style="left:493px;top:689px">E<u>n</u>coding</div>
<div class="m" style="left:557px;top:689px"><u>L</u>anguage</div>
<div class="m" style="left:623px;top:689px">Se<u>t</u>tings</div>
<div class="m" style="left:679px;top:689px">T<u>o</u>ols</div>
<div class="m" style="left:339px;top:708px"><u>M</u>acro</div>
<div class="m" style="left:387px;top:708px"><u>R</u>un</div>
<div class="m" style="left:422px;top:708px"><u>P</u>lugins</div>
<div class="m" style="left:475px;top:708px"><u>W</u>indow</div>
<div class="m" style="left:533px;top:708px"><u>?</u></div>
<div class="m" style="left:714px;top:708px">X</div>
<div style="left:333px;top:723px;width:395px;height:28px;background:#f4f4f4"></div>
<svg width="393" height="28" style="left:334px;top:723px">
<path d="M5 5h10l3 3v12H5z" fill="#fafafa" stroke="#bbb"/><circle cx="16" cy="18" r="3.500" fill="#58a83a"/>
<path d="M26 20V11h6l2-3h7v12z" fill="#f0c050" stroke="#b88a20"/><rect x="33" y="5" width="9" height="9" fill="#dce8f4" stroke="#88a"/>
<rect x="50" y="5" width="15" height="15" fill="#8a8a8a"/><rect x="53" y="5" width="9" height="6" fill="#d8d8d8"/><rect x="53" y="14" width="9" height="6" fill="#eee"/>
<rect x="72" y="5" width="11" height="11" fill="#8a8a8a"/><rect x="76" y="9" width="11" height="11" fill="#777"/>
<path d="M96 5h10l2 2v12H96z" fill="#eee" stroke="#aaa"/><circle cx="107" cy="18" r="3.500" fill="#e06020"/>
<rect x="118" y="5" width="10" height="12" fill="#eee" stroke="#aaa"/><rect x="122" y="8" width="10" height="12" fill="#eee" stroke="#aaa"/><circle cx="133" cy="18" r="3.500" fill="#e06020"/>
<rect x="144" y="11" width="14" height="8" fill="#999" stroke="#666"/><rect x="146" y="5" width="10" height="7" fill="#eef" stroke="#888"/>
<path d="M163 4V24M241 4V24M403 4" stroke="#bbb"/>
<path d="M184 5L176 20M176 5L184 20" stroke="#777" stroke-width="2.500"/>
<rect x="196" y="6" width="9" height="12" fill="#bbb" stroke="#777"/><rect x="201" y="10" width="9" height="11" fill="#ddd" stroke="#777"/>
<rect x="219" y="6" width="14" height="15" fill="#d8b070" stroke="#a07a30"/><rect x="224" y="10" width="10" height="12" fill="#dce8f8" stroke="#89a"/>
<path d="M251 8H259A5 5 0 0 1 259 18H252" stroke="#2a9a2a" stroke-width="3" fill="none"/><path d="M252 4L247 8L252 12Z" fill="#2a9a2a"/>
<path d="M285 8H278A5 5 0 0 0 278 18H285" stroke="#999" stroke-width="3" fill="none"/><path d="M284 4L289 8L284 12Z" fill="#999"/>
<path d="M294 4V24M348 4V24" stroke="#bbb"/>
<rect x="304" y="10" width="5" height="10" fill="#333"/><rect x="311" y="10" width="5" height="10" fill="#333"/><rect x="305" y="6" width="3" height="5" fill="#555"/><rect x="312" y="6" width="3" height="5" fill="#555"/>
<text x="327" y="14" font-size="10" font-weight="bold" fill="#2060d0" font-family="Liberation Sans">b</text><text x="333" y="21" font-size="10" font-weight="bold" fill="#2090e0" font-family="Liberation Sans">a</text>
<circle cx="364" cy="12" r="5.500" fill="#cce4f4" stroke="#6a9ab8"/><path d="M366 17H372M369 14V20" stroke="#4a9a4a" stroke-width="2"/>
<text x="383" y="13" font-size="9" fill="#444" font-family="Liberation Sans">»</text>
</svg>
<div style="left:333px;top:751px;width:395px;height:26px;background:#f0f0f0"></div>
<div class="t" style="left:336px;top:753px;width:126px;height:22px;background:#bcbcbc;line-height:23px;color:#777;font-size:11.5px;padding-left:18px;box-sizing:border-box;overflow:hidden;letter-spacing:-.25px">deviceSpecList.tsv</div>
<div class="t" style="left:463px;top:753px;width:124px;height:22px;background:#bcbcbc;line-height:23px;color:#777;font-size:11.5px;padding-left:18px;box-sizing:border-box;overflow:hidden;letter-spacing:-.25px">screenExports.tsv</div>
<div class="t" style="left:589px;top:753px;width:108px;height:22px;background:#bcbcbc;line-height:23px;color:#777;font-size:11.5px;padding-left:18px;box-sizing:border-box;overflow:hidden;letter-spacing:-.25px">Arcade Wall - Dev</div>
<svg width="393" height="26" style="left:334px;top:751px">
<rect x="5" y="6" width="13" height="14" fill="#3a86d0"/><rect x="7" y="13" width="9" height="6" fill="#9cc4ec"/>
<rect x="132" y="6" width="13" height="14" fill="#3a86d0"/><rect x="134" y="13" width="9" height="6" fill="#9cc4ec"/>
<rect x="258" y="6" width="13" height="14" fill="#3a86d0"/><rect x="260" y="13" width="9" height="6" fill="#9cc4ec"/>
<rect x="114" y="7" width="10" height="10" fill="#d8d8d8"/><path d="M116 9L122 15M122 9L116 15" stroke="#999" stroke-width="1.500"/>
<rect x="241" y="7" width="10" height="10" fill="#d8d8d8"/><path d="M243 9L249 15M249 9L243 15" stroke="#999" stroke-width="1.500"/>
<rect x="363" y="6" width="15" height="15" fill="#f2f2f2" stroke="#aaa"/><rect x="378" y="6" width="14" height="15" fill="#f2f2f2" stroke="#aaa"/>
<path d="M373 10L368 13.500L373 17ZM383 10L388 13.500L383 17Z" fill="#111"/>
</svg>
<div style="left:333px;top:776px;width:395px;height:180px;background:#fff;border:2px solid #8c8c8c;border-bottom-color:#c8c8c8;box-sizing:border-box"></div>
<div style="left:335px;top:778px;width:49px;height:176px;background:#e4e4e4"></div>
<div style="left:385px;top:794px;width:339px;height:16px;background:#e8e8ff"></div>
<div class="g" style="top:779px">1</div>
<div class="g" style="top:795px">2</div>
<div class="g" style="top:811px">3</div>
<div class="g" style="top:827px">4</div>
<div class="g" style="top:843px">5</div>
<div class="g" style="top:859px">6</div>
<div class="g" style="top:875px">7</div>
<div class="g" style="top:891px">8</div>
<div class="c" style="left:385px;top:779px">shader NormalClamp(</div>
<div class="c" style="left:417px;top:795px">output color c = 0</div>
<div class="c" style="left:416px;top:827px">)</div>
<div class="c" style="left:385px;top:843px">{</div>
<div class="c" style="left:449px;top:875px">c = Ng;</div>
<div class="c" style="left:385px;top:891px">}</div>
<div style="left:560px;top:795px;width:1px;height:15px;background:#6000a0"></div>
<div style="left:418px;top:858px;width:1px;height:32px;border-left:1px dotted #bbb"></div>
<div class="m" style="left:334px;top:962px;line-height:16px">Ln : 2</div>
<div class="m" style="left:374px;top:962px;line-height:16px">Col : 23</div>
<div class="m" style="left:424px;top:962px;line-height:16px">Sel :</div>
<div class="m" style="left:453px;top:962px;line-height:16px">Windows (CR LF)</div>
<div class="m" style="left:563px;top:962px;line-height:16px">UTF-8</div>
<div class="m" style="left:683px;top:962px;line-height:16px">INS</div>
<svg width="397" height="24" style="left:332px;top:957px"><path d="M117 0V22M226 0V22M347 0V22M376 0V22" stroke="#d0d0d0"/><path d="M390 18h2M386 18h2M390 14h2M386 14h2M390 10h2" stroke="#aaa"/></svg>

</div></body></html>
